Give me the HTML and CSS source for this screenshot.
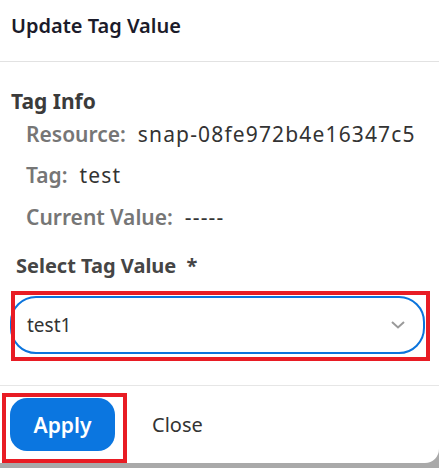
FILE: index.html
```html
<!DOCTYPE html>
<html>
<head>
<meta charset="utf-8">
<link rel="stylesheet" href="styles.css">
</head>
<body>
<div class="dialog">
  <div class="header">
    <h1 class="title">Update Tag Value</h1>
  </div>
  <div class="body">
    <h2 class="section">Tag Info</h2>
    <div class="info">
      <div class="row"><span class="lbl">Resource:</span><span class="val">snap-08fe972b4e16347c5</span></div>
      <div class="row"><span class="lbl">Tag:</span><span class="val">test</span></div>
      <div class="row"><span class="lbl">Current Value:</span><span class="val">-----</span></div>
    </div>
    <div class="field">
      <div class="field-label">Select Tag Value <span class="req">*</span></div>
      <div class="select-wrap">
        <div class="select">
          <span class="select-value">test1</span>
          <svg class="chevron" width="14" height="8" viewBox="0 0 14 8"><path d="M1 1 L7 6.5 L13 1" fill="none" stroke="#9a9a9a" stroke-width="2"/></svg>
        </div>
        <div class="highlight hl-select"></div>
      </div>
    </div>
  </div>
  <div class="footer">
    <div class="btn-wrap">
      <button class="btn-primary">Apply</button>
      <div class="highlight hl-apply"></div>
    </div>
    <button class="btn-text">Close</button>
  </div>
</div>
</body>
</html>
```
FILE: styles.css
```css
html, body {
  margin: 0;
  padding: 0;
  background: #a9a9a9;
}
body {
  width: 439px;
  height: 468px;
  overflow: hidden;
  font-family: "Noto Sans", "Open Sans", sans-serif;
}
.dialog {
  background: #fff;
  height: 463px;
  border-bottom-right-radius: 14px;
  display: flex;
  flex-direction: column;
}
.header {
  height: 62px;
  box-sizing: border-box;
  border-bottom: 1px solid #e2e2e2;
  padding: 13px 11px 0;
}
.title {
  margin: 0;
  font-size: 20px;
  line-height: 26px;
  font-weight: 600;
  color: #1b1b2a;
}
.body {
  padding: 25px 11px 0;
  border-bottom: 1px solid #e6e6e6;
  height: 324px;
  box-sizing: border-box;
}
.section {
  margin: 0;
  font-size: 21px;
  line-height: 28px;
  font-weight: 700;
  color: #3b3b3b;
}
.info {
  padding-left: 15px;
  display: flex;
  flex-direction: column;
}
.row {
  height: 41px;
  display: flex;
  align-items: center;
  gap: 12px;
  font-size: 21px;
}
.row:first-child {
  margin-top: -2px;
}
.row:last-child {
  margin-top: 1px;
}
.lbl {
  color: #767676;
  font-weight: 600;
}
.val {
  color: #333;
  letter-spacing: 1.15px;
}
.field {
  margin-top: 16px;
}
.field-label {
  padding-left: 5px;
  font-size: 20px;
  line-height: 26px;
  font-weight: 700;
  color: #454545;
}
.req {
  margin-left: 5px;
}
.select-wrap {
  position: relative;
  margin-top: 17px;
  margin-left: -1px;
  width: 415px;
}
.select {
  height: 58px;
  box-sizing: border-box;
  border: 2px solid #0b74dc;
  border-radius: 26px;
  display: flex;
  align-items: center;
  justify-content: space-between;
  padding: 0 18px 0 15px;
}
.select-value {
  font-size: 19px;
  color: #333;
}
.chevron {
  display: block;
}
.highlight {
  position: absolute;
  border: 4px solid #e81c24;
  pointer-events: none;
}
.hl-select {
  top: -5px;
  left: 1px;
  right: -5px;
  bottom: -7px;
}
.footer {
  flex: 1;
  display: flex;
  align-items: center;
  padding: 0 10px;
  gap: 37px;
}
.btn-wrap {
  position: relative;
}
.btn-primary {
  display: block;
  width: 105px;
  height: 53px;
  border: none;
  border-radius: 17px;
  background: #0b76e0;
  color: #fff;
  font-family: inherit;
  font-size: 21px;
  font-weight: 600;
  padding: 0;
}
.hl-apply {
  top: -5px;
  left: -8px;
  right: -12px;
  bottom: -12px;
}
.btn-text {
  border: none;
  background: none;
  padding: 0;
  font-family: inherit;
  font-size: 20px;
  color: #333;
}
```
